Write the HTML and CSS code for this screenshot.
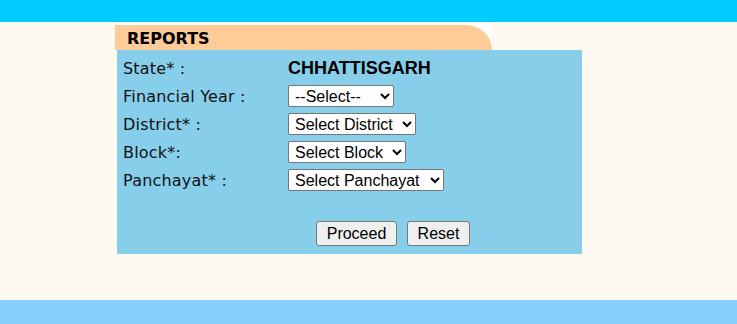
FILE: index.html
```html
<!DOCTYPE html>
<html>
<head>
<meta charset="utf-8">
<title>Reports</title>
<link rel="stylesheet" href="styles.css">
</head>
<body>
<div class="topbar"></div>
<main class="content">
  <div class="tabwrap"><div class="tab">REPORTS</div></div>
  <div class="panel">
    <div class="row"><span class="label">State* :</span><span class="state">CHHATTISGARH</span></div>
    <div class="row"><span class="label">Financial Year :</span>
      <select class="sel w-fy"><option>--Select--</option></select></div>
    <div class="row"><span class="label">District* :</span>
      <select class="sel w-dist"><option>Select District</option></select></div>
    <div class="row"><span class="label">Block*:</span>
      <select class="sel w-block"><option>Select Block</option></select></div>
    <div class="row"><span class="label">Panchayat* :</span>
      <select class="sel w-pan"><option>Select Panchayat</option></select></div>
    <div class="actions">
      <button class="btn w-proceed">Proceed</button>
      <button class="btn w-reset">Reset</button>
    </div>
  </div>
</main>
<div class="bottombar"></div>
</body>
</html>
```

FILE: styles.css
```css
html, body {
  margin: 0;
  padding: 0;
  background: #fffaf0;
  font-family: "DejaVu Sans", Verdana, sans-serif;
  color: #111;
}
.topbar {
  height: 22px;
  background: #00ccff;
}
.content {
  height: 278px;
  padding-left: 115px;
}
.tabwrap {
  width: 377px;
  height: 28px;
  padding-top: 3px;
  box-sizing: border-box;
  background: #ffffff;
}
.tab {
  height: 25px;
  background: #ffcc99;
  border-top-right-radius: 26px 25px;
  padding-left: 12px;
  font-family: "DejaVu Sans", Verdana, sans-serif;
  font-weight: bold;
  font-size: 16px;
  line-height: 27px;
  color: #000;
}
.panel {
  margin-left: 2px;
  width: 465px;
  height: 204px;
  box-sizing: border-box;
  background: #87ceeb;
  padding: 4px 0 0 6px;
}
.row {
  display: flex;
  align-items: center;
  height: 28px;
}
.label {
  width: 165px;
  font-size: 16px;
  letter-spacing: 0.2px;
}
.state {
  font-family: "Liberation Sans", Arial, sans-serif;
  font-weight: bold;
  font-size: 18px;
  color: #000;
}
.sel {
  height: 22px;
  font-family: "Liberation Sans", Arial, sans-serif;
  font-size: 16px;
  color: #000;
  background: #fff;
  border: 1px solid #767676;
  border-radius: 2px;
  padding: 0 0 0 2px;
}
.w-fy { width: 106px; }
.w-dist { width: 128px; }
.w-block { width: 118px; }
.w-pan { width: 156px; }
.actions {
  display: flex;
  gap: 10px;
  margin-top: 27px;
  padding-left: 193px;
}
.btn {
  height: 25px;
  font-family: "Liberation Sans", Arial, sans-serif;
  font-size: 16px;
  color: #000;
  background: #efefef;
  border: 1px solid #767676;
  border-radius: 3px;
  padding: 0;
}
.w-proceed { width: 81px; }
.w-reset { width: 63px; }
.bottombar {
  height: 24px;
  background: #87cefa;
}
```
